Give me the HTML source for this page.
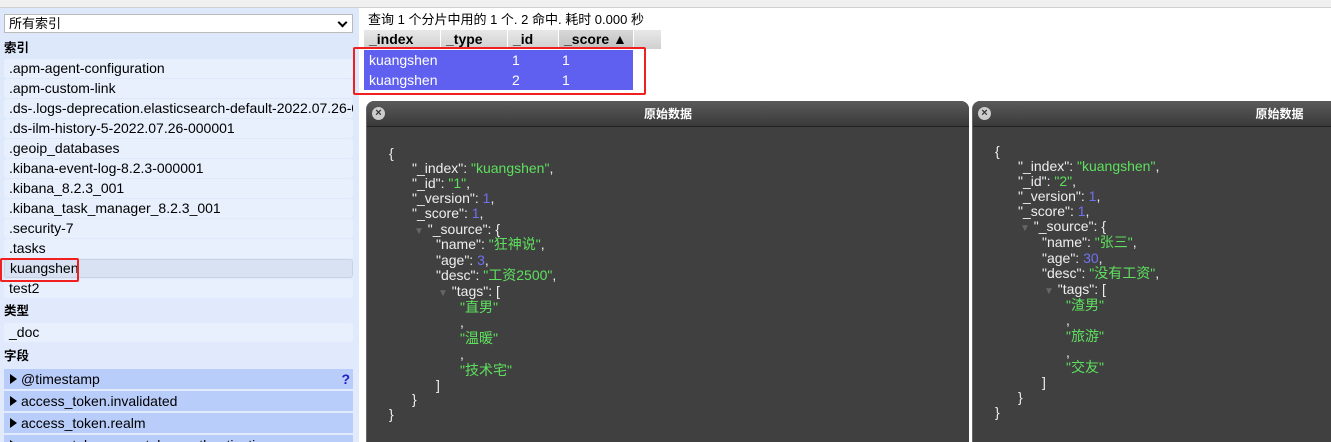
<!DOCTYPE html>
<html style="width:1331px;height:442px;overflow:hidden"><head><meta charset="utf-8">
<style>
*{box-sizing:border-box;margin:0;padding:0}
body{width:1331px;height:442px;overflow:hidden;background:#fff;font-family:"Liberation Sans","Noto Sans CJK SC",sans-serif;font-size:12.5px;color:#000;position:relative}
.top{position:absolute;left:0;top:0;width:1331px;height:8px;background:#f0f0f0;border-bottom:1px solid #d0d0d0}
.side{position:absolute;left:0;top:8px;width:359px;height:434px;background:linear-gradient(#dde8fb,#e2ebfc);overflow:hidden}
.sel{position:absolute;left:4px;top:6px;width:349px;height:19px;background:#fff;border:1px solid #bbb;font-size:13px;padding-left:4px;line-height:17px}
.sel:after{content:"";position:absolute;right:6px;top:4px;width:5px;height:5px;border-right:2px solid #000;border-bottom:2px solid #000;transform:rotate(45deg)}
.h{position:absolute;left:4px;font-weight:bold;font-size:12.5px;line-height:16px}
.it{position:absolute;left:4px;width:349px;height:19px;background:#e8f0fd;border-radius:3px;padding-left:5px;line-height:19px;white-space:nowrap;overflow:hidden;font-size:14px}
.fd{position:absolute;left:4px;width:349px;height:20px;background:#b9cdfb;padding-left:17px;line-height:20px;font-size:14px;white-space:nowrap;overflow:hidden}
.fd:before{content:"";position:absolute;left:6px;top:5px;border-left:7px solid #000;border-top:5px solid transparent;border-bottom:5px solid transparent}
.q{position:absolute;left:368px;top:12px;font-size:13px;line-height:16px}
.th{position:absolute;top:30px;height:19px;background:linear-gradient(#e8e8e8,#d0d0d0);font-weight:bold;font-size:14px;padding-left:5px;line-height:19px;border-right:1px solid #fff;white-space:nowrap}
.row{position:absolute;left:364px;width:269px;height:20px;background:#6060f0;color:#fff;font-size:14px;line-height:20px}
.row span{position:absolute}
.red{position:absolute;border:2px solid #f02020;border-radius:2px}
.pan{position:absolute;top:101px;height:345px;background:#404040;border-radius:8px 8px 0 0;overflow:hidden;border-left:1px solid #666}
.tb{position:absolute;left:0;top:0;width:100%;height:26px;background:linear-gradient(#5a5a5a,#3a3a3a);border-bottom:1px solid #222;color:#fff;font-weight:bold;font-size:12px;text-align:center;line-height:26px}
.x{position:absolute;left:5px;top:6px;width:13px;height:13px;border-radius:50%;background:#ccc;color:#333;font-size:11px;line-height:13px;text-align:center;font-weight:bold}
.j{position:absolute;color:#eee;font-size:14px;line-height:16px;white-space:nowrap}
.s{color:#5ee05e}.n{color:#7070f0}
.tri{color:#666;font-size:10px}
</style></head><body>
<div class="top"></div>
<div class="side">
<div class="sel">所有索引</div>
<div class="h" style="top:32px">索引</div>
<div class="it" style="top:51px">.apm-agent-configuration</div>
<div class="it" style="top:71px">.apm-custom-link</div>
<div class="it" style="top:91px">.ds-.logs-deprecation.elasticsearch-default-2022.07.26-000001</div>
<div class="it" style="top:111px">.ds-ilm-history-5-2022.07.26-000001</div>
<div class="it" style="top:131px">.geoip_databases</div>
<div class="it" style="top:151px">.kibana-event-log-8.2.3-000001</div>
<div class="it" style="top:171px">.kibana_8.2.3_001</div>
<div class="it" style="top:191px">.kibana_task_manager_8.2.3_001</div>
<div class="it" style="top:211px">.security-7</div>
<div class="it" style="top:231px">.tasks</div>
<div class="it" style="top:251px;background:#d8e2f2;border:1px solid #c8d2e2;line-height:17px">kuangshen</div>
<div class="it" style="top:271px">test2</div>
<div class="h" style="top:295px">类型</div>
<div class="it" style="top:315px">_doc</div>
<div class="h" style="top:340px">字段</div>
<div class="fd" style="top:361px">@timestamp<span style="position:absolute;right:3px;color:#2020c0;font-weight:bold">?</span></div>
<div class="fd" style="top:383px">access_token.invalidated</div>
<div class="fd" style="top:405px">access_token.realm</div>
<div class="fd" style="top:427px">access_token.user_token.authentication</div>
</div>
<div class="red" style="left:0;top:258px;width:79px;height:24px"></div>

<div class="q">查询 1 个分片中用的 1 个. 2 命中. 耗时 0.000 秒</div>
<div class="th" style="left:364px;width:77px">_index</div>
<div class="th" style="left:441px;width:67px">_type</div>
<div class="th" style="left:508px;width:51px">_id</div>
<div class="th" style="left:559px;width:75px;background:linear-gradient(#d8d8d8,#c0c0c0)">_score ▲</div>
<div class="th" style="left:634px;width:28px"></div>
<div class="row" style="top:50px"><span style="left:5px">kuangshen</span><span style="left:148px">1</span><span style="left:198px">1</span></div>
<div class="row" style="top:70px"><span style="left:5px">kuangshen</span><span style="left:148px">2</span><span style="left:198px">1</span></div>
<div class="red" style="left:353px;top:47px;width:293px;height:48px"></div>

<div class="pan" style="left:366px;width:603px">
<div class="tb"><div class="x">×</div>原始数据</div>
</div>
<div class="pan" style="left:972px;width:614px">
<div class="tb"><div class="x">×</div>原始数据</div>
</div>

<div class="j" style="left:389px;top:145px">{</div>
<div class="j" style="left:412px;top:160px">"_index": <span class="s">"kuangshen"</span>,</div>
<div class="j" style="left:412px;top:175px">"_id": <span class="s">"1"</span>,</div>
<div class="j" style="left:412px;top:190px">"_version": <span class="n">1</span>,</div>
<div class="j" style="left:412px;top:205px">"_score": <span class="n">1</span>,</div>
<div class="j" style="left:414px;top:221px"><span class="tri">▼</span> "_source": {</div>
<div class="j" style="left:436px;top:236px">"name": <span class="s">"狂神说"</span>,</div>
<div class="j" style="left:436px;top:252px">"age": <span class="n">3</span>,</div>
<div class="j" style="left:436px;top:267px">"desc": <span class="s">"工资2500"</span>,</div>
<div class="j" style="left:438px;top:283px"><span class="tri">▼</span> "tags": [</div>
<div class="j" style="left:460px;top:299px"><span class="s">"直男"</span></div>
<div class="j" style="left:460px;top:314px">,</div>
<div class="j" style="left:460px;top:330px"><span class="s">"温暖"</span></div>
<div class="j" style="left:460px;top:346px">,</div>
<div class="j" style="left:460px;top:362px"><span class="s">"技术宅"</span></div>
<div class="j" style="left:436px;top:377px">]</div>
<div class="j" style="left:412px;top:391px">}</div>
<div class="j" style="left:389px;top:406px">}</div>

<div class="j" style="left:995px;top:143px">{</div>
<div class="j" style="left:1018px;top:158px">"_index": <span class="s">"kuangshen"</span>,</div>
<div class="j" style="left:1018px;top:173px">"_id": <span class="s">"2"</span>,</div>
<div class="j" style="left:1018px;top:188px">"_version": <span class="n">1</span>,</div>
<div class="j" style="left:1018px;top:203px">"_score": <span class="n">1</span>,</div>
<div class="j" style="left:1020px;top:218px"><span class="tri">▼</span> "_source": {</div>
<div class="j" style="left:1042px;top:234px">"name": <span class="s">"张三"</span>,</div>
<div class="j" style="left:1042px;top:250px">"age": <span class="n">30</span>,</div>
<div class="j" style="left:1042px;top:265px">"desc": <span class="s">"没有工资"</span>,</div>
<div class="j" style="left:1044px;top:281px"><span class="tri">▼</span> "tags": [</div>
<div class="j" style="left:1066px;top:297px"><span class="s">"渣男"</span></div>
<div class="j" style="left:1066px;top:312px">,</div>
<div class="j" style="left:1066px;top:328px"><span class="s">"旅游"</span></div>
<div class="j" style="left:1066px;top:344px">,</div>
<div class="j" style="left:1066px;top:359px"><span class="s">"交友"</span></div>
<div class="j" style="left:1042px;top:374px">]</div>
<div class="j" style="left:1018px;top:389px">}</div>
<div class="j" style="left:995px;top:404px">}</div>
</body></html>
